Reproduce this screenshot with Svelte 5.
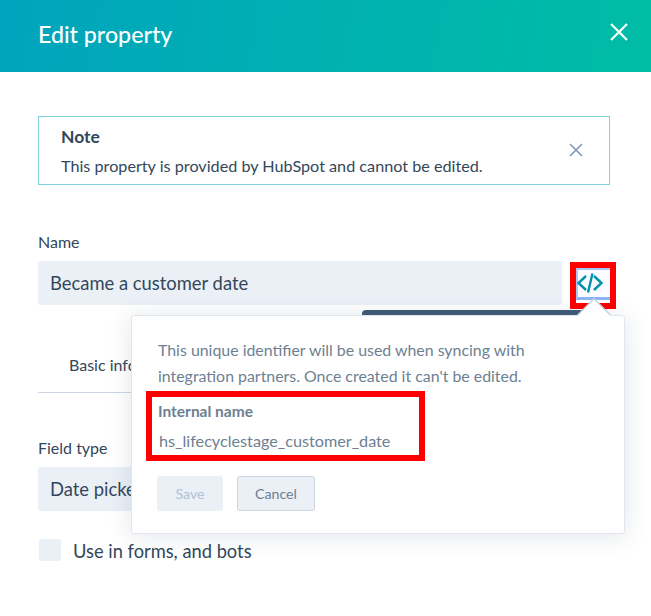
<script>
  let showNote = true;
</script>

<div class="panel">
  <header class="top">
    <h1>Edit property</h1>
    <svg class="close" width="20" height="20" viewBox="0 0 20 20"><path d="M2 2 18 18M18 2 2 18" /></svg>
  </header>

  <div class="body">
    {#if showNote}
      <div class="note">
        <div>
          <h2>Note</h2>
          <p>This property is provided by HubSpot and cannot be edited.</p>
        </div>
        <svg class="note-x" width="14" height="14" viewBox="0 0 14 14"><path d="M1 1 13 13M13 1 1 13" /></svg>
      </div>
    {/if}

    <label class="name-label" for="name">Name</label>
    <div class="name-row">
      <div class="input" id="name">Became a customer date</div>
      <div class="code-btn">
        <svg width="28" height="24" viewBox="0 0 28 24"><path d="M10 6 2.5 13l7.5 7M18 6l7.5 7-7.5 7M16.5 3.5l-4.5 19" /></svg>
      </div>
    </div>

    <div class="tabs"><span>Basic info</span></div>

    <div class="field-label">Field type</div>
    <div class="select">Date picker</div>

    <div class="check-row">
      <span class="check"></span>
      <span class="check-text">Use in forms, and bots</span>
    </div>
  </div>

  <div class="dark-bar"></div>
  <div class="mark mark-code"></div>
  <div class="popover">
    <span class="arrow"></span>
    <p class="desc">This unique identifier will be used when syncing with integration partners. Once created it can't be edited.</p>
    <div class="internal">
      <div class="internal-label">Internal name</div>
      <div class="internal-value">hs_lifecyclestage_customer_date</div>
    </div>
    <div class="buttons">
      <button class="save" disabled>Save</button>
      <button class="cancel">Cancel</button>
    </div>
  </div>
</div>

<style>
  :global(body) {
    margin: 0;
    background: #fff;
  }

  .panel {
    position: relative;
    width: 651px;
    height: 616px;
    overflow: hidden;
    font-family: Lato, "Open Sans", sans-serif;
    color: #33475b;
  }

  .top {
    height: 72px;
    box-sizing: border-box;
    padding: 0 22px 0 38px;
    display: flex;
    align-items: center;
    justify-content: space-between;
    background: linear-gradient(100deg, #00a4bd, #00bda5);
  }

  .top h1 {
    margin: 0 0 4px;
    font-size: 23.2px;
    font-weight: 500;
    color: #fff;
  }

  .close {
    margin-bottom: 8px;
  }

  .close path {
    fill: none;
    stroke: #fff;
    stroke-width: 2.2;
  }

  .body {
    padding: 44px 41px 0 38px;
  }

  .note {
    height: 69px;
    box-sizing: border-box;
    padding: 9px 26px 0 22px;
    border: 1px solid #7fd1de;
    display: flex;
    justify-content: space-between;
  }

  .note h2 {
    margin: 0 0 9px;
    font-size: 17.5px;
    line-height: 21px;
    font-weight: 700;
  }

  .note p {
    margin: 0;
    font-size: 16.2px;
    line-height: 20px;
  }

  .note-x {
    margin-top: 17px;
  }

  .note-x path {
    fill: none;
    stroke: #7c98b6;
    stroke-width: 1.6;
  }

  .name-label {
    display: block;
    margin-top: 47px;
    font-size: 16px;
    line-height: 20px;
  }

  .name-row {
    margin-top: 9px;
    display: flex;
    gap: 14px;
  }

  .input {
    width: 524px;
    height: 44px;
    box-sizing: border-box;
    padding-left: 12px;
    border-radius: 3px;
    background: #eaf0f6;
    font-size: 18.4px;
    line-height: 44px;
  }

  .code-btn {
    flex: none;
    width: 34px;
    height: 32px;
    margin-top: 7px;
    box-sizing: border-box;
    display: flex;
    align-items: flex-start;
    border-left: 2px solid #a9c6f7;
    border-bottom: 3px solid #8fb4f5;
    border-top: 2px solid #a9c6f7;
    background: #fbfcff;
  }

  .code-btn svg {
    flex: none;
    margin: 0 0 0 -2px;
  }

  .code-btn path {
    fill: none;
    stroke: #0091ae;
    stroke-width: 2.4;
  }

  .tabs {
    margin-top: 40px;
    height: 48px;
    box-sizing: border-box;
    padding: 10px 0 0 31px;
    border-bottom: 1px solid #cbd6e2;
    font-size: 16px;
    line-height: 20px;
  }

  .field-label {
    margin-top: 45px;
    font-size: 16px;
    line-height: 20px;
  }

  .select {
    margin-top: 9px;
    height: 44px;
    box-sizing: border-box;
    padding-left: 12px;
    border-radius: 3px;
    background: #eaf0f6;
    font-size: 18.4px;
    line-height: 44px;
  }

  .check-row {
    margin-top: 27px;
    display: flex;
    align-items: center;
    gap: 12px;
    font-size: 18.3px;
    line-height: 22px;
  }

  .check-text {
    margin-top: 2px;
  }

  .check {
    width: 22px;
    height: 22px;
    margin-left: 1px;
    border-radius: 2px;
    background: #eaf0f6;
  }

  .dark-bar {
    position: absolute;
    left: 362px;
    top: 310px;
    width: 222px;
    height: 8px;
    border-radius: 4px 4px 0 0;
    background: #425b76;
  }

  .popover {
    position: absolute;
    left: 131px;
    top: 315px;
    width: 494px;
    height: 219px;
    box-sizing: border-box;
    padding: 21px 26px 0;
    background: #fff;
    border: 1px solid #dfe6ee;
    border-radius: 3px;
    box-shadow: 0 2px 24px rgba(51, 71, 91, 0.14);
    color: #6d7f92;
  }

  .arrow {
    position: absolute;
    left: 450px;
    top: -13px;
    width: 24px;
    height: 24px;
    box-sizing: border-box;
    background: #fff;
    border-top: 1px solid #b6c3d2;
    border-left: 1px solid #b6c3d2;
    transform: rotate(45deg);
  }

  .desc {
    margin: 0;
    width: 400px;
    font-size: 15.9px;
    line-height: 26px;
  }

  .internal {
    position: relative;
    margin-top: 12px;
  }

  .internal::before {
    content: "";
    position: absolute;
    left: -12px;
    top: -10px;
    width: 267px;
    height: 58px;
    border: 6px solid #f00;
  }

  .internal-label {
    font-size: 15.5px;
    line-height: 20px;
    font-weight: 700;
  }

  .internal-value {
    margin: 10px 0 0 1px;
    font-size: 16.2px;
    line-height: 20px;
  }

  .buttons {
    margin: 25px 0 0 -1px;
    display: flex;
    gap: 14px;
  }

  .buttons button {
    height: 35px;
    box-sizing: border-box;
    border-radius: 3px;
    font-family: inherit;
    font-size: 14.2px;
    padding: 0;
  }

  .save {
    width: 66px;
    border: 1px solid #eaf0f6;
    background: #eaf0f6;
    color: #b0c1d4;
  }

  .cancel {
    width: 78px;
    border: 1px solid #cbd6e2;
    background: #eaf0f6;
    color: #6d7f92;
  }

  .mark {
    position: absolute;
    box-sizing: border-box;
    border: 6px solid #f00;
  }

  .mark-code {
    left: 570px;
    top: 262px;
    width: 46px;
    height: 47px;
  }
</style>
